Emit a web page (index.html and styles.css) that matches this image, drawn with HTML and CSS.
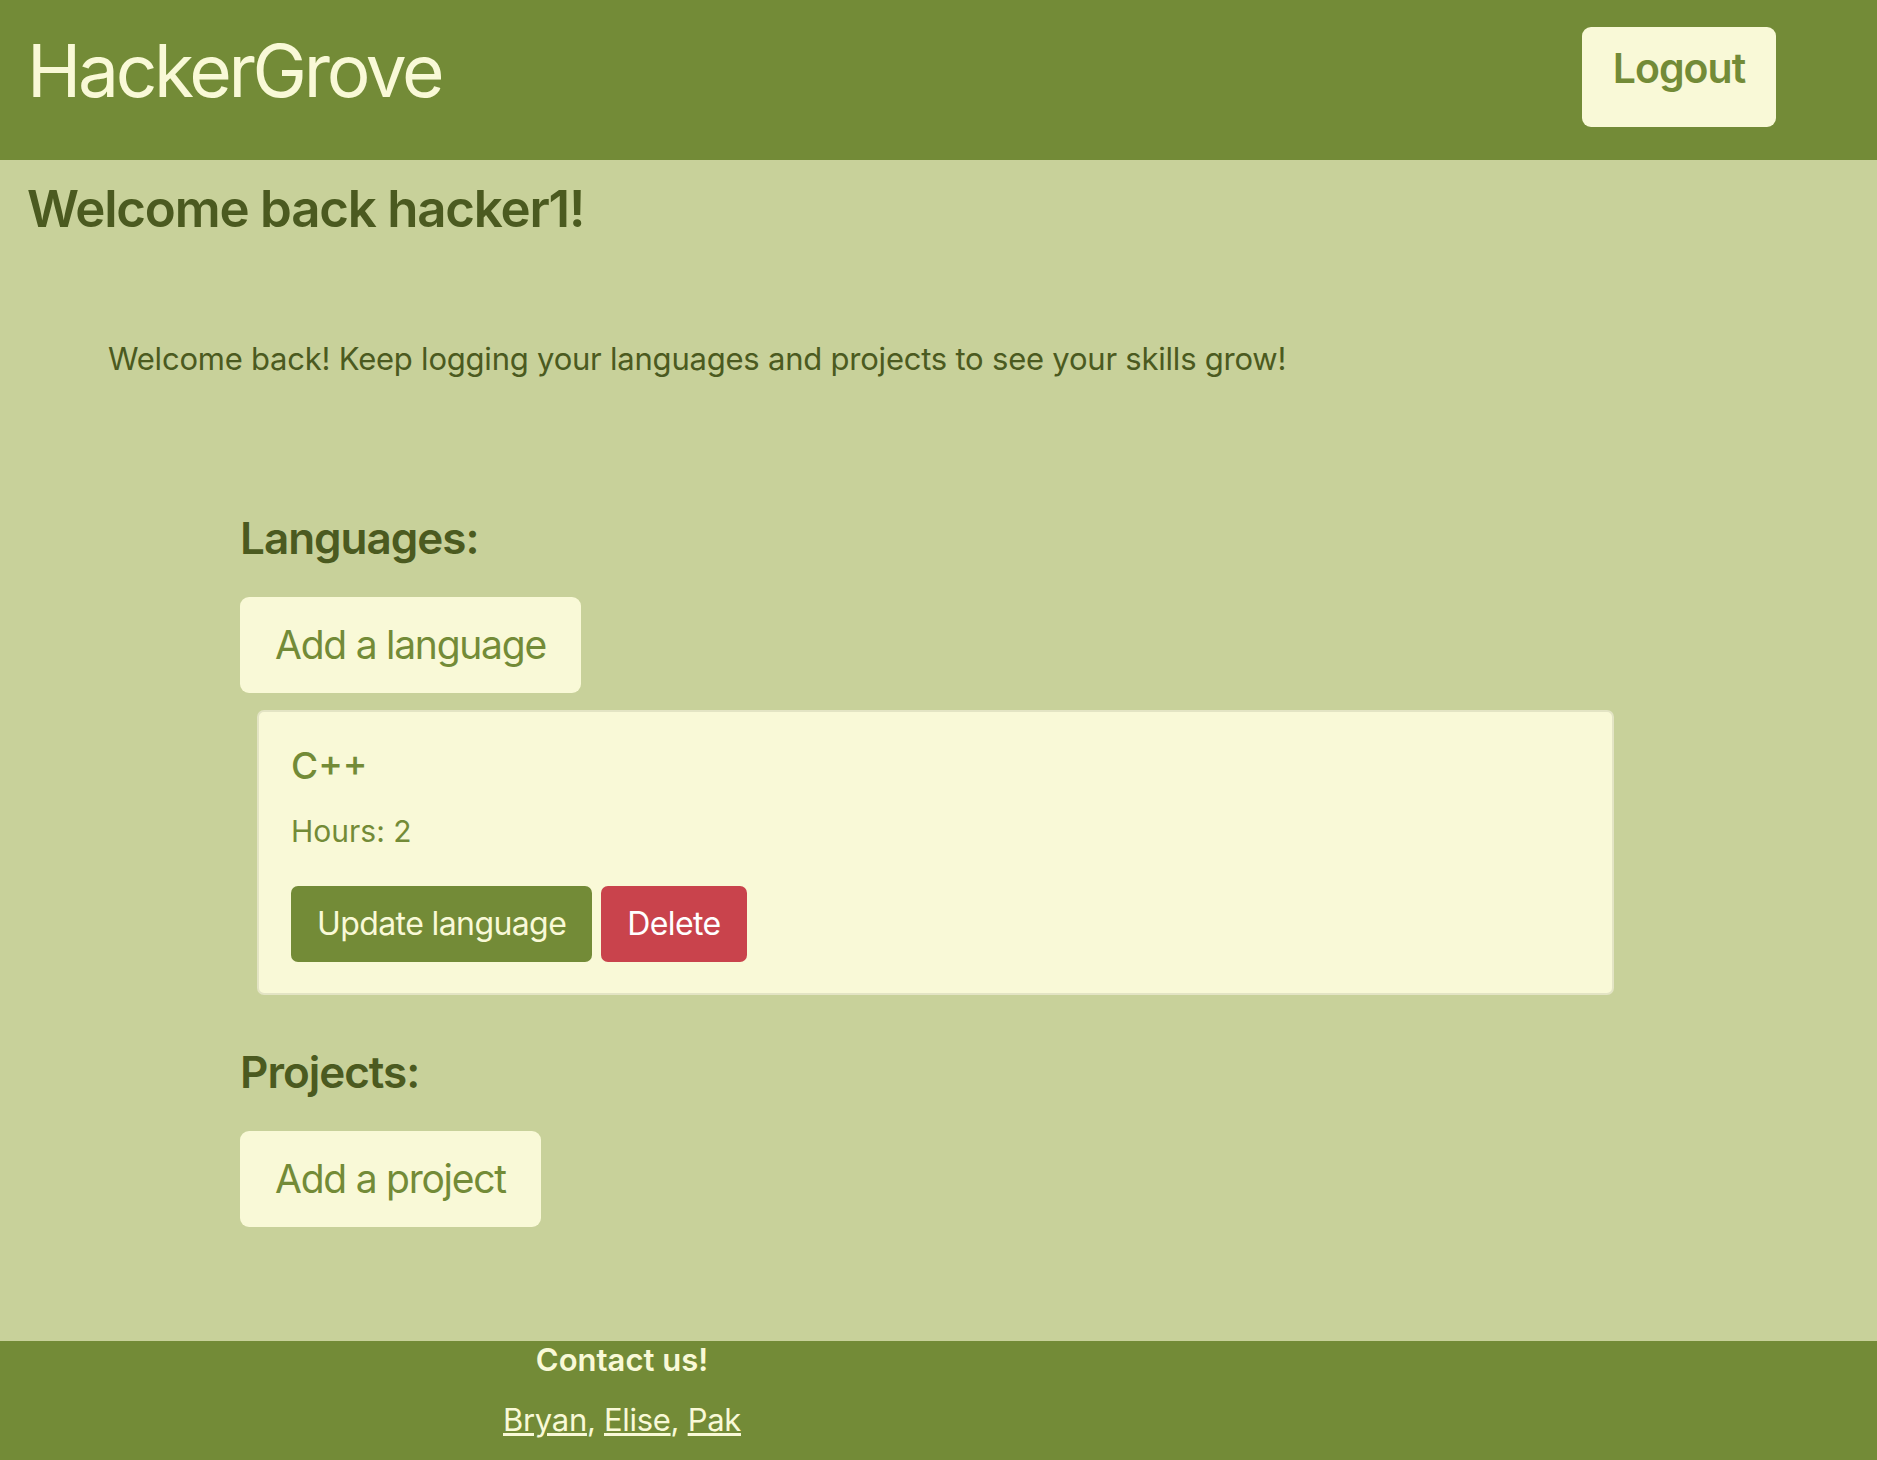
FILE: index.html
```html
<!DOCTYPE html>
<html lang="en">
<head>
<meta charset="utf-8">
<title>HackerGrove</title>
<link rel="stylesheet" href="styles.css">
</head>
<body>
<header class="topbar">
  <div class="brand">HackerGrove</div>
  <button class="btn-logout">Logout</button>
</header>
<main class="content">
  <h1 class="welcome-title">Welcome back hacker1!</h1>
  <p class="welcome-text">Welcome back! Keep logging your languages and projects to see your skills grow!</p>
  <section class="section">
    <h2 class="section-title">Languages:</h2>
    <button class="btn-add">Add a language</button>
    <div class="card">
      <h3 class="card-title">C++</h3>
      <p class="card-text">Hours: 2</p>
      <div class="card-actions">
        <button class="btn btn-update">Update language</button>
        <button class="btn btn-delete">Delete</button>
      </div>
    </div>
    <h2 class="section-title projects">Projects:</h2>
    <button class="btn-add">Add a project</button>
  </section>
</main>
<footer class="footer">
  <div class="footer-inner">
    <div class="contact">Contact us!</div>
    <div class="links"><a href="#">Bryan</a>, <a href="#">Elise</a>, <a href="#">Pak</a></div>
  </div>
</footer>
</body>
</html>
```
FILE: styles.css
```css
html, body {
  margin: 0;
  padding: 0;
}
body {
  background: #c8d19a;
  font-family: Inter, "Noto Sans", sans-serif;
  color: #4b5a20;
  height: 1460px;
  display: flex;
  flex-direction: column;
  overflow: hidden;
}
button {
  font-family: inherit;
  border: none;
  cursor: pointer;
}
.topbar {
  background: #738b37;
  height: 160px;
  box-sizing: border-box;
  display: flex;
  justify-content: space-between;
  align-items: flex-start;
  padding: 27px 101px 0 27px;
  flex-shrink: 0;
}
.brand {
  color: #f9f9d7;
  font-size: 73px;
  line-height: 1.2;
  font-weight: 400;
  letter-spacing: -3.3px;
}
.btn-logout {
  background: #f9f9d7;
  color: #738b37;
  font-size: 41px;
  font-weight: 600;
  line-height: 49px;
  height: 100px;
  width: 194px;
  padding: 17px 0 34px;
  border-radius: 9px;
  letter-spacing: -1px;
}
.content {
  flex: 1;
  padding: 18px 0 0 27px;
}
.welcome-title {
  margin: 0;
  font-size: 51px;
  line-height: 61px;
  font-weight: 600;
  color: #4b5a20;
  letter-spacing: -1.2px;
}
.welcome-text {
  margin: 97px 0 0 81px;
  font-size: 31px;
  line-height: 46px;
  letter-spacing: -0.22px;
}
.section {
  margin: 130px 0 0 213px;
}
.section-title {
  margin: 0;
  font-size: 44px;
  line-height: 53px;
  font-weight: 600;
  color: #4b5a20;
  letter-spacing: -1px;
}
.section-title.projects {
  margin-top: 51px;
}
.btn-add {
  display: block;
  margin-top: 32px;
  background: #f9f9d7;
  color: #738b37;
  font-size: 39px;
  line-height: 58px;
  padding: 19px 35px;
  border-radius: 9px;
  letter-spacing: -1.25px;
}
.card {
  margin: 17px 0 0 17px;
  width: 1357px;
  box-sizing: border-box;
  background: #f9f9d7;
  border: 2px solid #e3e4c4;
  border-radius: 7px;
  padding: 32px 32px 31px 32px;
}
.card-title {
  margin: 0;
  font-size: 37px;
  line-height: 44px;
  font-weight: 500;
  color: #738b37;
}
.card-text {
  margin: 21px 0 0;
  font-size: 30px;
  line-height: 45px;
  color: #738b37;
}
.card-actions {
  margin-top: 32px;
  display: flex;
  gap: 9px;
}
.btn {
  font-size: 32px;
  line-height: 48px;
  padding: 14px 26px;
  border-radius: 7px;
  color: #f9f9d7;
  letter-spacing: -0.6px;
}
.btn-update {
  background: #738b37;
}
.btn-delete {
  background: #c9434c;
  color: #ffffff;
}
.footer {
  background: #738b37;
  height: 119px;
  flex-shrink: 0;
  display: flex;
}
.footer-inner {
  width: 1244px;
  text-align: center;
  color: #f9f9d7;
  font-size: 31px;
  line-height: 37px;
}
.contact {
  font-weight: 600;
}
.links {
  margin-top: 23px;
  letter-spacing: -0.3px;
}
.links a {
  color: #f9f9d7;
}
```
